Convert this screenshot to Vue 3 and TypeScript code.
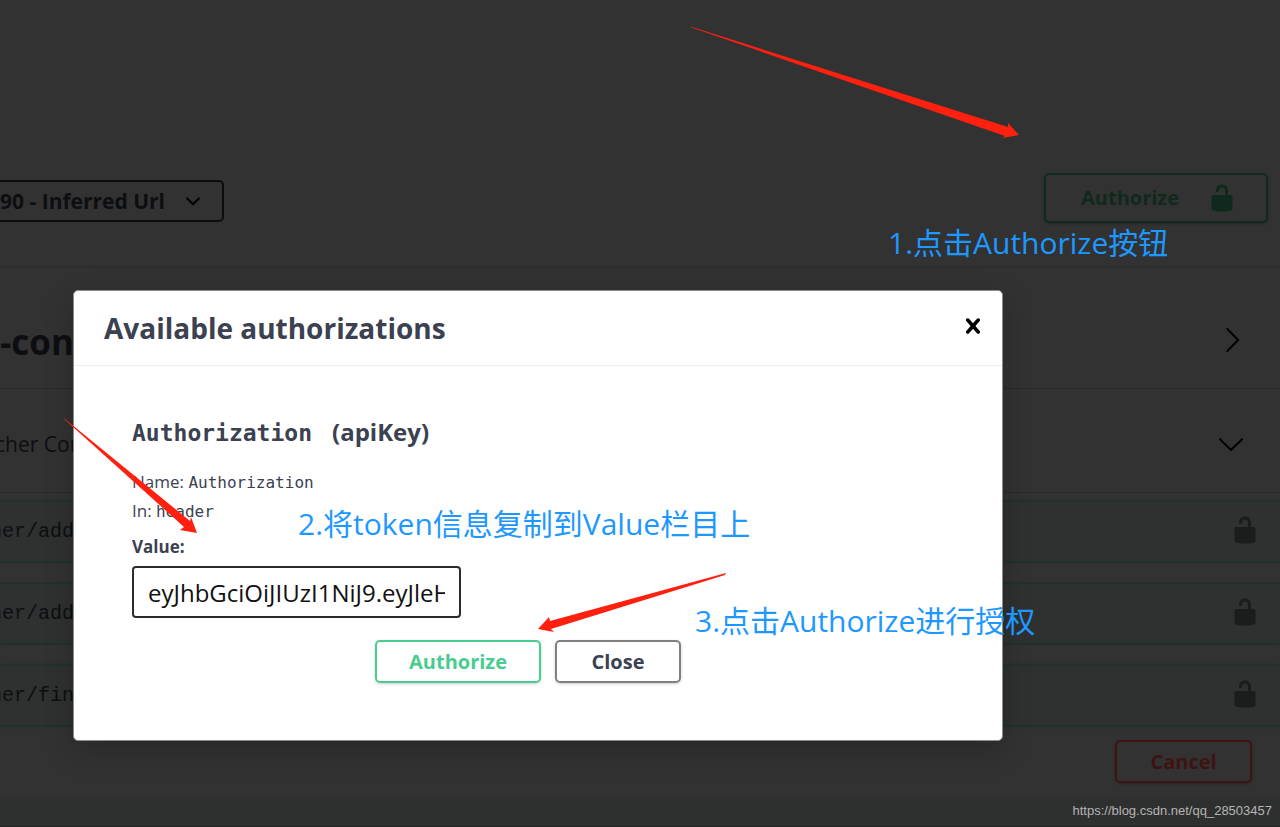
<script setup lang="ts">
import { ref } from 'vue'

const LOCK_PATH =
  'M15.8 8H14V5.6C14 2.703 12.665 1 10 1 7.334 1 6 2.703 6 5.6V6h2v-.801C8 3.754 8.797 3 10 3c1.203 0 2 .754 2 2.199V8H4c-.553 0-1 .646-1 1.199V17c0 .549.428 1.139.951 1.307l1.197.387C5.672 18.861 6.55 19 7.1 19h5.8c.549 0 1.428-.139 1.951-.307l1.196-.387c.524-.167.953-.757.953-1.306V9.199C17 8.646 16.352 8 15.8 8z'

interface Operation {
  id: number
  path: string
}

const operations: Operation[] = [
  { id: 1, path: 'ner/add' },
  { id: 2, path: 'ner/add' },
  { id: 3, path: 'ner/fin' },
]

const server = ref('90 - Inferred Url')
const token = ref('eyJhbGciOiJIUzI1NiJ9.eyJleHAiOjE2')
const open = ref(true)
</script>

<template>
  <div class="page">
    <header class="topbar"></header>

    <section class="servers">
      <div class="server-select">
        <select v-model="server" aria-label="Servers">
          <option>90 - Inferred Url</option>
        </select>
        <svg class="icon" viewBox="0 0 20 20" aria-hidden="true">
          <path d="M13.418 7.859c.271-.268.709-.268.978 0 .27.268.272.701 0 .969l-3.908 3.83c-.27.268-.707.268-.979 0l-3.908-3.83c-.27-.267-.27-.701 0-.969.271-.268.709-.268.978 0L10 11l3.418-3.141z" />
        </svg>
      </div>
      <button class="btn authorize-main" type="button" @click="open = true">
        <span>Authorize</span>
        <svg class="icon" viewBox="0 0 20 20" aria-hidden="true"><path :d="LOCK_PATH" /></svg>
      </button>
    </section>

    <section class="tag tag-first">
      <h2>-con</h2>
      <button class="expand" type="button" aria-label="Expand">
        <svg class="icon" viewBox="0 0 20 20" aria-hidden="true">
          <path d="M13.25 10L6.109 2.58c-.268-.27-.268-.707 0-.979.268-.27.701-.27.969 0l7.83 7.908c.268.271.268.709 0 .979l-7.83 7.908c-.268.271-.701.27-.969 0-.268-.269-.268-.707 0-.979L13.25 10z" />
        </svg>
      </button>
    </section>

    <section class="tag tag-second">
      <p>cher Con</p>
      <button class="expand" type="button" aria-label="Collapse">
        <svg class="icon" viewBox="0 0 20 20" aria-hidden="true">
          <path d="M17.418 6.109c.272-.268.709-.268.979 0s.271.701 0 .969l-7.908 7.83c-.27.268-.707.268-.979 0l-7.908-7.83c-.27-.268-.27-.701 0-.969.271-.268.709-.268.979 0L10 13.25l7.418-7.141z" />
        </svg>
      </button>
    </section>

    <ul class="operations">
      <li v-for="op in operations" :key="op.id">
        <span>{{ op.path }}</span>
        <button class="lock" type="button" aria-label="Authorization">
          <svg class="icon" viewBox="0 0 20 20" aria-hidden="true"><path :d="LOCK_PATH" /></svg>
        </button>
      </li>
    </ul>

    <div class="cancel-row">
      <button class="btn cancel" type="button">Cancel</button>
    </div>
    <footer class="bottom">https://blog.csdn.net/qq_28503457</footer>

    <div v-if="open" class="modal" role="dialog" aria-labelledby="modal-title">
      <div class="modal-head">
        <h3 id="modal-title">Available authorizations</h3>
        <button class="close-x" type="button" aria-label="Close dialog" @click="open = false">
          <svg class="icon" viewBox="0 0 20 20" aria-hidden="true">
            <path d="M14.348 14.849c-.469.469-1.229.469-1.697 0L10 11.819l-2.651 3.029c-.469.469-1.229.469-1.697 0-.469-.469-.469-1.229 0-1.697l2.758-3.15-2.759-3.152c-.469-.469-.469-1.228 0-1.697s1.228-.469 1.697 0L10 8.183l2.651-3.031c.469-.469 1.228-.469 1.697 0s.469 1.229 0 1.697l-2.758 3.152 2.758 3.15c.469.469.469 1.229 0 1.698z" />
          </svg>
        </button>
      </div>
      <form class="modal-body" @submit.prevent>
        <h4><code>Authorization</code><span>(apiKey)</span></h4>
        <p>Name: <code>Authorization</code></p>
        <p>In: <code>header</code></p>
        <label for="token">Value:</label>
        <input id="token" v-model="token" type="text" />
        <div class="actions">
          <button class="btn confirm" type="submit">Authorize</button>
          <button class="btn dismiss" type="button" @click="open = false">Close</button>
        </div>
      </form>
    </div>

    <div class="notes">
      <svg width="1280" height="827" viewBox="0 0 1280 827" aria-hidden="true">
        <path d="M690 27L692 27L1008 127L1008 123L1019 135L1002 138L1005 136Z" />
        <path d="M63 418L65 419L190 521L191 517L197 533L180 530L184 527Z" />
        <path d="M726 573L725 575L551 629L554 632L538 629L549 617L550 621Z" />
      </svg>
      <p class="note note-one">1.点击Authorize按钮</p>
      <p class="note note-two">2.将token信息复制到Value栏目上</p>
      <p class="note note-three">3.点击Authorize进行授权</p>
    </div>
  </div>
</template>

<style>
body {
  background: #323232;
}
</style>

<style scoped>
.page {
  position: relative;
  display: flex;
  flex-direction: column;
  min-height: 100vh;
  overflow: hidden;
  background: #323232;
  color: #0d0e11;
  font-family: 'Open Sans', 'Noto Sans', 'Noto Sans CJK SC', sans-serif;
}

.page *,
.page {
  box-sizing: border-box;
}

h2,
h3,
h4,
p,
ul {
  margin: 0;
  padding: 0;
}

button,
select,
input {
  margin: 0;
  font-family: inherit;
  color: inherit;
}

button {
  padding: 0;
  border: 0;
  background: none;
}

.icon {
  display: block;
  width: 30px;
  height: 30px;
  fill: currentColor;
}

.btn {
  display: flex;
  align-items: center;
  justify-content: center;
  height: 43px;
  border: 2px solid currentColor;
  border-radius: 5px;
  box-shadow: 0 1px 3px rgba(0, 0, 0, 0.2);
  font-size: 20px;
  font-weight: 700;
  line-height: 28px;
}

.topbar {
  height: 108px;
  background: #323232;
}

.servers {
  display: flex;
  align-items: center;
  justify-content: space-between;
  height: 160px;
  padding: 22px 12px 0 0;
  border-bottom: 2px solid #2d2d2d;
}

.server-select {
  position: relative;
  width: 224px;
  margin-top: 6px;
}

.server-select select {
  display: block;
  width: 100%;
  height: 42px;
  padding: 0;
  border: 2px solid #0b0c0d;
  border-left: 0;
  border-radius: 0 5px 5px 0;
  appearance: none;
  background: #323232;
  font-size: 21px;
  font-weight: 700;
}

.server-select .icon {
  position: absolute;
  top: 6px;
  right: 16px;
  color: #000000;
}

.authorize-main {
  gap: 28px;
  width: 224px;
  height: 50px;
  padding-left: 6px;
  color: #0f2a1d;
}

.tag {
  display: flex;
  align-items: center;
  justify-content: space-between;
  border-bottom: 1px solid #292929;
}

.tag-first {
  height: 121px;
  padding: 0 34px 0 0;
}

.tag-first h2 {
  padding-top: 28px;
  font-size: 35px;
  line-height: 44px;
}

.tag-first .expand {
  padding-top: 24px;
}

.tag-second {
  height: 104px;
  padding: 6px 35px 0 0;
}

.tag-second p {
  margin-left: -5px;
  font-size: 21px;
  line-height: 30px;
}

.expand {
  color: #000000;
}

.expand .icon {
  width: 28px;
  height: 28px;
}

.operations {
  display: flex;
  flex-direction: column;
  gap: 21px;
  padding-top: 8px;
  list-style: none;
}

.operations li {
  display: flex;
  align-items: center;
  justify-content: space-between;
  height: 61px;
  padding: 0 20px 0 0;
  border: 1px solid #14362a;
  border-width: 1px 0;
  background: #2e3130;
  box-shadow: 0 0 3px rgba(0, 0, 0, 0.2);
}

.operations span {
  margin-left: -10px;
  font-family: 'Liberation Mono', monospace;
  font-size: 20px;
}

.lock {
  padding-bottom: 4px;
  color: #1b1d1c;
}

.cancel-row {
  display: flex;
  justify-content: flex-end;
  padding: 14px 28px 14px 0;
}

.cancel {
  width: 137px;
  color: #3d1313;
}

.bottom {
  flex: 1;
  padding: 4px 8px 4px 0;
  border-bottom: 1px solid #242625;
  background: #2e302f;
  color: #b4b4b4;
  font-family: 'Liberation Sans', Arial, sans-serif;
  font-size: 13px;
  line-height: 20px;
  text-align: right;
}

.modal {
  position: absolute;
  top: 290px;
  left: 73px;
  width: calc(100% - 146px);
  max-width: 930px;
  padding-bottom: 57px;
  border: 1px solid #8d8d8d;
  border-radius: 5px;
  background: #ffffff;
  box-shadow: 0 10px 30px rgba(0, 0, 0, 0.2);
  color: #3b4151;
}

.modal-head {
  display: flex;
  align-items: center;
  justify-content: space-between;
  height: 75px;
  padding: 0 14px 4px 30px;
  border-bottom: 1px solid #ededed;
}

.modal-head h3 {
  padding-top: 4px;
  font-size: 28px;
  font-weight: 700;
  line-height: 40px;
}

.close-x {
  color: #000000;
}

.modal-body {
  display: flex;
  flex-direction: column;
  align-items: flex-start;
  padding: 48px 58px 0;
}

.modal-body h4 {
  display: flex;
  gap: 20px;
  align-items: baseline;
  margin-bottom: 17px;
  font-size: 24px;
  font-weight: 700;
  line-height: 36px;
}

.modal-body code {
  font-family: 'DejaVu Sans Mono', monospace;
  line-height: 1;
}

.modal-body h4 code {
  font-size: 23px;
  font-weight: 700;
}

.modal-body p {
  font-size: 17px;
  line-height: 29px;
}

.modal-body p code {
  font-size: 16px;
}

.modal-body label {
  margin-top: 9px;
  font-size: 17px;
  font-weight: 700;
  line-height: 26px;
}

.modal-body input {
  width: 329px;
  height: 52px;
  margin-top: 6px;
  padding: 0 14px;
  border: 2px solid #2b2c2e;
  border-radius: 4px;
  background: #ffffff;
  color: #111111;
  font-size: 24px;
}

.actions {
  display: flex;
  gap: 14px;
  align-self: center;
  margin-top: 22px;
  padding-right: 20px;
}

.confirm {
  width: 166px;
  border-color: #49cc90;
  color: #49cc90;
}

.dismiss {
  width: 126px;
  border-color: #808080;
}

.notes {
  position: absolute;
  inset: 0;
  pointer-events: none;
}

.notes svg {
  display: block;
  fill: #ff2010;
}

.modal + .notes .note,
.note {
  position: absolute;
  color: #1e98ff;
  font-size: 30px;
  line-height: 40px;
  white-space: nowrap;
}

.note-one {
  top: 223px;
  left: 888px;
}

.note-two {
  top: 504px;
  left: 298px;
}

.note-three {
  top: 601px;
  left: 695px;
}
</style>
